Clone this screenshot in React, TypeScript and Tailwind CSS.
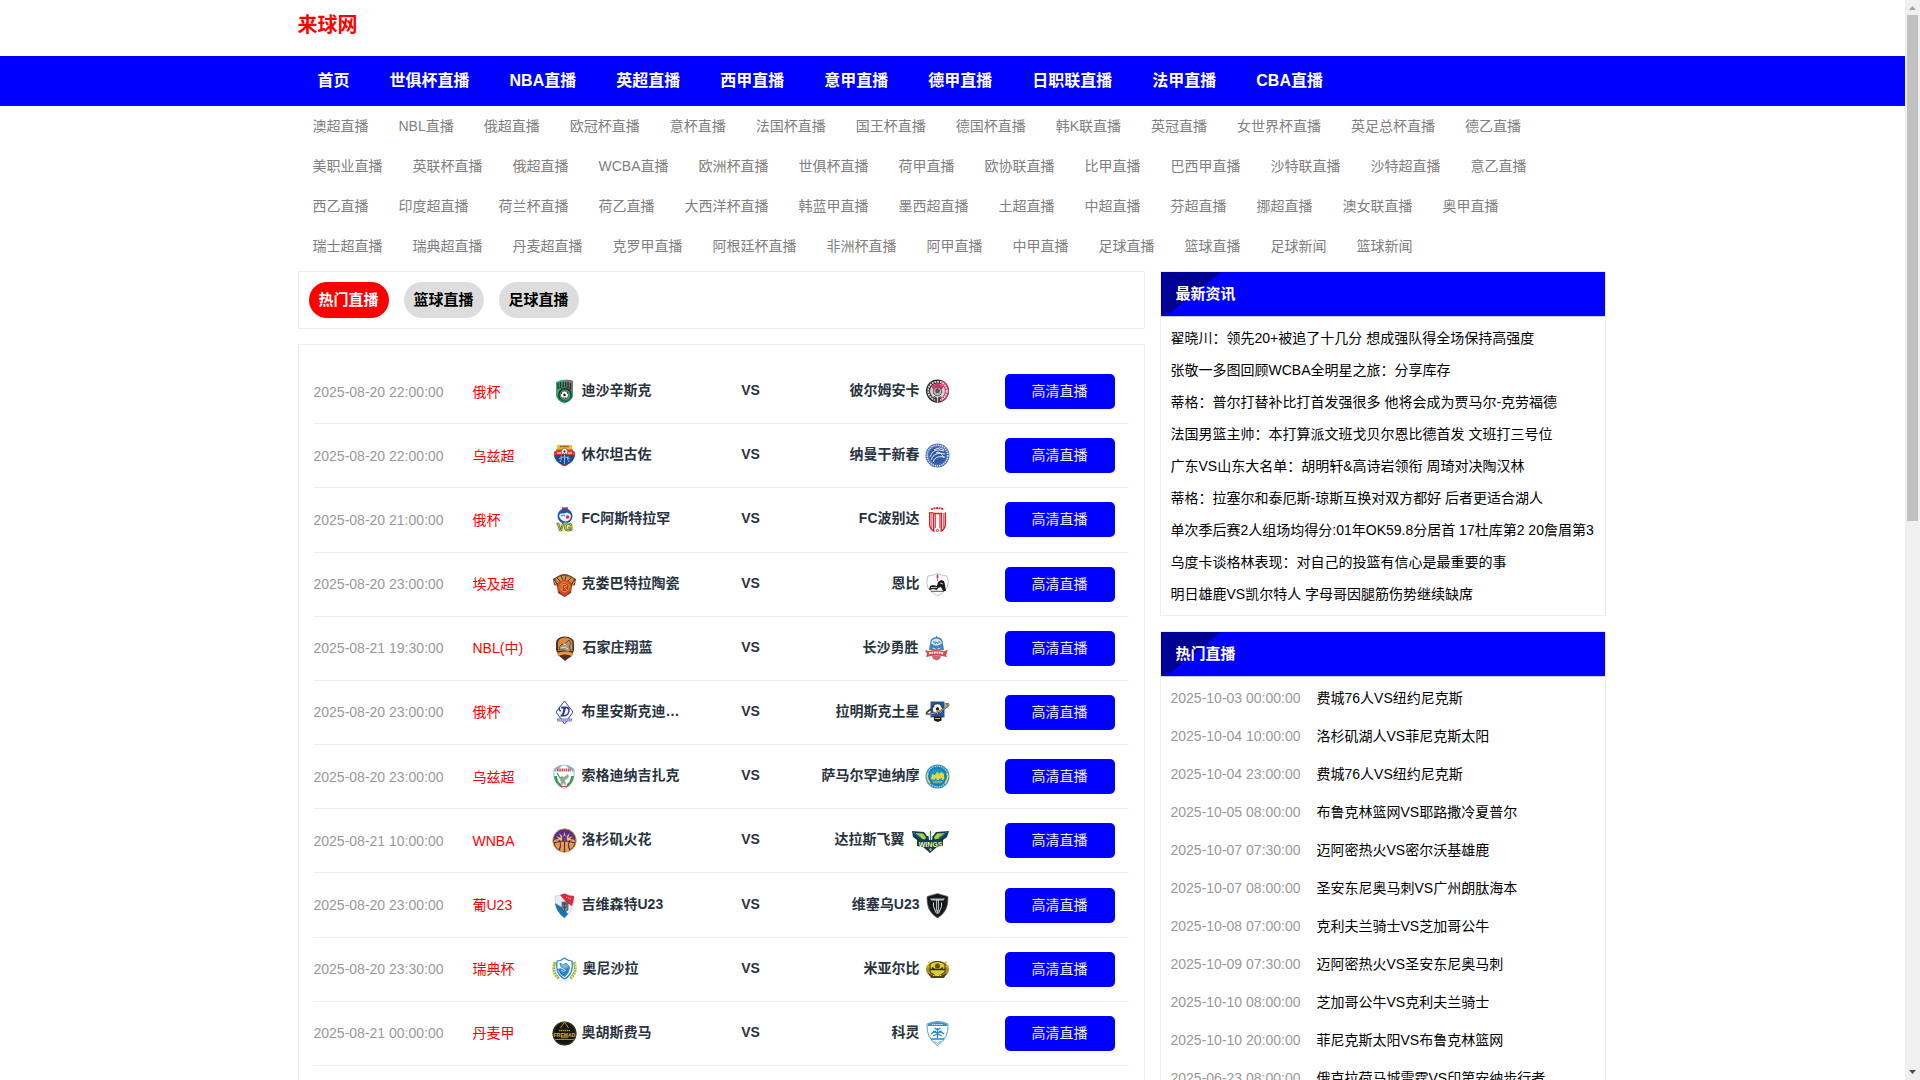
import React from "react";

const mainNav = ["首页", "世俱杯直播", "NBA直播", "英超直播", "西甲直播", "意甲直播", "德甲直播", "日职联直播", "法甲直播", "CBA直播"];

const subNav = [
	"澳超直播", "NBL直播", "俄超直播", "欧冠杯直播", "意杯直播", "法国杯直播", "国王杯直播", "德国杯直播", "韩K联直播", "英冠直播", "女世界杯直播", "英足总杯直播", "德乙直播",
	"美职业直播", "英联杯直播", "俄超直播", "WCBA直播", "欧洲杯直播", "世俱杯直播", "荷甲直播", "欧协联直播", "比甲直播", "巴西甲直播", "沙特联直播", "沙特超直播", "意乙直播",
	"西乙直播", "印度超直播", "荷兰杯直播", "荷乙直播", "大西洋杯直播", "韩蓝甲直播", "墨西超直播", "土超直播", "中超直播", "芬超直播", "挪超直播", "澳女联直播", "奥甲直播",
	"瑞士超直播", "瑞典超直播", "丹麦超直播", "克罗甲直播", "阿根廷杯直播", "非洲杯直播", "阿甲直播", "中甲直播", "足球直播", "篮球直播", "足球新闻", "篮球新闻",
];

const tabs = ["热门直播", "篮球直播", "足球直播"];

const news = [
	"翟晓川：领先20+被追了十几分 想成强队得全场保持高强度",
	"张敬一多图回顾WCBA全明星之旅：分享库存",
	"蒂格：普尔打替补比打首发强很多 他将会成为贾马尔-克劳福德",
	"法国男篮主帅：本打算派文班戈贝尔恩比德首发 文班打三号位",
	"广东VS山东大名单：胡明轩&高诗岩领衔 周琦对决陶汉林",
	"蒂格：拉塞尔和泰厄斯-琼斯互换对双方都好 后者更适合湖人",
	"单次季后赛2人组场均得分:01年OK59.8分居首 17杜库第2 20詹眉第3",
	"乌度卡谈格林表现：对自己的投篮有信心是最重要的事",
	"明日雄鹿VS凯尔特人 字母哥因腿筋伤势继续缺席",
];

const hotMatches = [
	{ time: "2025-10-03 00:00:00", name: "费城76人VS纽约尼克斯" },
	{ time: "2025-10-04 10:00:00", name: "洛杉矶湖人VS菲尼克斯太阳" },
	{ time: "2025-10-04 23:00:00", name: "费城76人VS纽约尼克斯" },
	{ time: "2025-10-05 08:00:00", name: "布鲁克林篮网VS耶路撒冷夏普尔" },
	{ time: "2025-10-07 07:30:00", name: "迈阿密热火VS密尔沃基雄鹿" },
	{ time: "2025-10-07 08:00:00", name: "圣安东尼奥马刺VS广州朗肽海本" },
	{ time: "2025-10-08 07:00:00", name: "克利夫兰骑士VS芝加哥公牛" },
	{ time: "2025-10-09 07:30:00", name: "迈阿密热火VS圣安东尼奥马刺" },
	{ time: "2025-10-10 08:00:00", name: "芝加哥公牛VS克利夫兰骑士" },
	{ time: "2025-10-10 20:00:00", name: "菲尼克斯太阳VS布鲁克林篮网" },
	{ time: "2025-06-23 08:00:00", name: "俄克拉荷马城雷霆VS印第安纳步行者" },
];

const Ball = ({ cx, cy, r }: { cx: number; cy: number; r: number }) => (
	<g transform={`translate(${cx} ${cy}) scale(${r / 4})`}>
		<circle r="4" fill="#fff" stroke="#222" strokeWidth=".6" />
		<path d="M0-1.5l1.4 1-.5 1.7h-1.8l-.5-1.7zM-3.6-1.4l1 .3.2-1.5-.9.2zM3.6-1.4l-1 .3-.2-1.5.9.2zM-2 3.3l.4-1.2 1.4.8-.3.9zM2 3.3l-.4-1.2-1.4.8.3.9z" fill="#222" />
	</g>
);

const crests: Record<string, React.ReactNode> = {
	khimik: (
		<>
			<path d="M4 3Q12-1 21 2V17Q20 22 12.5 24.5Q5 22 4 17z" fill="#3da474" />
			<path d="M12 1Q18 0 21 2V12H14z" fill="#777b79" />
			<path d="M6 4v6M8.500 3v6M11 3v5M13.500 3v5M16 3v6M18.500 4v7" stroke="#26332e" strokeWidth="1.300" />
			<path d="M6 9h13" stroke="#26332e" strokeWidth=".7" />
			<circle cx="13" cy="16" r="6.200" fill="none" stroke="#24332c" strokeWidth="1.500" />
			<Ball cx={12.500} cy={16} r={4} />
			<path d="M7 20Q12.500 25 19 19" fill="none" stroke="#1e7d4e" strokeWidth="1.500" />
		</>
	),
	perm: (
		<>
			<circle cx="12.500" cy="12" r="11.500" fill="#2a2729" />
			<path d="M16 1A11.500 11.500 0 0 1 16 23z" fill="#c93a70" />
			<circle cx="12.500" cy="12" r="9.300" fill="none" stroke="#e9dfe3" strokeWidth="1.800" strokeDasharray="1.800 .9" />
			<circle cx="12.500" cy="12" r="7.500" fill="#d9d3d5" />
			<path d="M6.500 7.500l4-2.500h4l4 2.500-1.500 3-3-1.500h-3l-3 1.500z" fill="#d8346c" />
			<circle cx="12.500" cy="12.500" r="4.300" fill="#b9b2b5" stroke="#444" strokeWidth=".8" />
			<path d="M10 11l2.500-2 2.500 2-1 3h-3z" fill="#5d4f55" />
			<path d="M9 17l3.500 2 3.500-2-2 7h-3z" fill="#453d40" />
			<path d="M12.500 17v7" stroke="#e8e4e5" strokeWidth=".9" />
		</>
	),
	surkhon: (
		<>
			<path d="M2 9Q5 8 5 5h15q0 3 3 4Q24 19 12.500 23Q1 19 2 9z" fill="#164d96" />
			<path d="M2 9Q5 8 5 6h5l2 6H2zM23 9Q20 8 20 6h-5l-2 6h10z" fill="#e3372b" />
			<path d="M5 2h15v4.500H5z" fill="#f2bd16" />
			<path d="M8 3.500h9" stroke="#7b5a10" strokeWidth="1.500" strokeDasharray="1.500 .6" />
			<Ball cx={12.500} cy={8.500} r={3.300} />
			<path d="M5 10h4M16 10h4" stroke="#fff" strokeWidth="1.200" />
			<path d="M12.500 12v9M9 13q1 4-1 6M16 13q-1 4 1 6M7 16q5-4 11 0" fill="none" stroke="#9fc1e6" strokeWidth=".9" />
			<path d="M9 21.500Q12.500 24 16 21.500" stroke="#d33" fill="none" />
		</>
	),
	namangan: (
		<>
			<circle cx="12.500" cy="12.500" r="12" fill="#4d6fb5" />
			<circle cx="12.500" cy="12.500" r="10.300" fill="none" stroke="#dbe5f5" strokeWidth="1.500" strokeDasharray="1.300 .9" />
			<circle cx="12.500" cy="12.500" r="8.500" fill="#315aa8" />
			<path d="M5 14Q8 4 19 8M6 17Q9 8 20 11M8 19Q10 12 20 14M11 10q4-3 8 5M9 7q6-4 10 0" fill="none" stroke="#dfe8f6" strokeWidth="1" />
		</>
	),
	volgar: (
		<>
			<path d="M10 .3h6v2.500h-6z" fill="#dd2531" />
			<circle cx="13" cy="9" r="7.500" fill="#1d56a5" />
			<path d="M7 8.500q1-3 5-2l3-1q4 1 4 4-1 5-6 5-5-1-6-6z" fill="#e8f2fb" />
			<path d="M9 9q2-2 4 0" stroke="#2b76bd" fill="none" />
			<circle cx="15.500" cy="10" r="1.800" fill="#e3303a" />
			<path d="M4 16l4-.5 2 4 2-4 8 .5 1 3-1 5.500H8z" fill="#fff24d" />
			<text x="12.700" y="24.300" textAnchor="middle" fontFamily="Liberation Sans" fontWeight="700" fontSize="11" fill="#fff24d" stroke="#28508f" strokeWidth=".7">VG</text>
		</>
	),
	pobeda: (
		<>
			<path d="M6 2.500Q12.500-.5 19 2.500" fill="none" stroke="#dd1f2b" strokeWidth="1.800" strokeDasharray="2 .6" />
			<path d="M4.700 5.500v12q0 4 4 6.500V6.500h7.600V24q4-2.500 4-6.500v-12" fill="none" stroke="#de202c" strokeWidth="1.500" />
			<path d="M10.500 6.500v14.500M14.700 6.500v14.500M6.800 6v15M18.300 6v15" stroke="#de202c" strokeWidth=".8" />
			<path d="M4 5.700h4.500" stroke="#de202c" />
			<circle cx="12.500" cy="23.500" r="1.100" fill="none" stroke="#de202c" />
		</>
	),
	ceramica: (
		<>
			<path d="M1 7l5-3q6-4 13 0l5 3-1 6-3 1-1 7-6.500 4L6 21 5 14 2 13z" fill="#7e351f" />
			<path d="M3 7q9-7 19 0l-2 4H5z" fill="#c79545" />
			<path d="M5 6l3 3M9 4l2 4M14 4l-1 4M19 6l-3 3" stroke="#5a2b22" />
			<path d="M6 10q6-4 13 0v9l-6.500 5L6 19z" fill="#d3482a" />
			<circle cx="12.500" cy="15" r="4.600" fill="#c23b22" stroke="#e8a13b" strokeWidth=".9" />
			<path d="M10 18v-5l3-1 2 2-3 1 3 3M2 9l3 5M23 9l-3 5" stroke="#efb246" fill="none" strokeWidth=".9" />
		</>
	),
	enppi: (
		<>
			<path d="M3 4Q8 4 12.500 1Q17 4 22 4Q27 17 12.500 24Q-2 17 3 4z" fill="#fff" stroke="#b4b4b4" strokeWidth=".8" />
			<path d="M12.500 2.500v4" stroke="#e0232b" strokeWidth="1.700" />
			<path d="M12.500 7v2" stroke="#444" strokeWidth=".7" />
			<path d="M4 18l1-4 3-1 4 1 1-4 3-2 3 1 1 4 1 6h-3l-2-4-3 1-1 2-4-1-3 1z" fill="#1d1d1d" />
			<path d="M6 15.500h6M15 11l3 1" stroke="#fff" strokeWidth=".7" />
			<path d="M6 19.300h13" stroke="#555" strokeWidth="1" />
		</>
	),
	shijiazhuang: (
		<>
			<path d="M4 7q0-6 8.500-6.500Q22 1 22 7v7l-2 6-7 4.500-6-4.500-3-6z" fill="#423429" />
			<path d="M6 7q0-5 7-5.500 7 .5 7.500 5.500v8H6z" fill="#e2873c" />
			<path d="M7 14q0-4 3-6l2 1 5-5 2 4-2 2 2 5-3 1q-5-3-9-2z" fill="#a8977f" stroke="#4a3b30" strokeWidth=".8" />
			<path d="M9 12l4-1 3 2M11 9l3-1" stroke="#ece2d0" strokeWidth=".9" fill="none" />
			<path d="M5 17q8-3 16 0l-1 3q-7-3-14 0z" fill="#ef9339" />
			<path d="M9 21h8l-4 4z" fill="#6b2319" />
		</>
	),
	changsha: (
		<>
			<path d="M6 8q0-7 6.500-7T19 8l1 6H5z" fill="#3c86bf" />
			<path d="M12.500 0v3" stroke="#3c86bf" />
			<path d="M8 4.500q4-4 9 0l1 3-4 2h-3L7 7.500z" fill="#d5e8f4" />
			<path d="M9 6h2.500M14 6h2.500M11 8l1.500-2 1.500 2" stroke="#2b6da8" fill="none" />
			<path d="M8.500 12l3 1M16.500 12l-3 1" stroke="#cfe4f2" fill="none" />
			<path d="M1 14l4 1q7-2 15 0l4-1-2 5 1 2q-10-3-21 0l1-3z" fill="#d84b46" />
			<path d="M5 17.300q7-1.500 15 0" stroke="#fff" strokeWidth="2" strokeDasharray="1.800 .7" fill="none" />
			<path d="M8 20q4-1 9 0l-1 3-3.500 1.500L9 23z" fill="#c96a72" />
		</>
	),
	dynamo: (
		<>
			<path d="M12.500 1l8.500 11-8.500 12L4 12z" fill="#fff" stroke="#3a3f98" strokeWidth="1" />
			<path d="M9.500 6.500h4q5 0 4 5-1 5-6 5H8l1-2h1l1.500-6H9zM14 8l-2 7q3 0 4-3t-2-4z" fill="#3036a0" fillRule="evenodd" />
			<path d="M7.500 8q-1 3 1.500 3" stroke="#3036a0" fill="none" strokeWidth="1.300" />
			<path d="M4.500 18.500h16l-1 3h-14z" fill="#7679bd" />
			<path d="M6 20h13" stroke="#e9eaf8" strokeDasharray="1.500 .5" />
		</>
	),
	saturn: (
		<>
			<path d="M5.500 1.500h14v16H5.500z" fill="#2254a3" />
			<path d="M9 16.500h7.500v4l-3.700 1.500L9 20.500z" fill="#16181c" />
			<path d="M10 18.500h5" stroke="#e0b433" strokeWidth="1" />
			<Ball cx={12.500} cy={9} r={5.200} />
			<path d="M19 5q5-2 4.500 0-2 3-10.500 7-9 3-11.500 2-.5-2 5-5" fill="none" stroke="#3b3830" strokeWidth="1.800" />
			<path d="M19 5q5-2 4.500 0-2 3-10.500 7-9 3-11.500 2" fill="none" stroke="#e5d8ab" strokeWidth=".8" />
		</>
	),
	sogdiana: (
		<>
			<path d="M2 5q5-4 10-4 5 0 10 4 2 15-10 19.500Q0 20 2 5z" fill="#fff" stroke="#92a6a1" strokeWidth=".7" />
			<path d="M2 7Q2 3 10 1l-2 3q-4 1-4 4zM22 7Q22 3 14 1l2 3q4 1 4 4z" fill="#74b4da" />
			<path d="M5 6h14" stroke="#cf5358" strokeWidth="3" strokeDasharray="1.600 .6" />
			<path d="M2 12q1 8 8 12l-1-4q-4-3-4-8zM22 12q-1 8-8 12l1-4q4-3 4-8z" fill="#399d55" />
			<path d="M8 15l2-3 2 1 4-3 1 3-4 3 1 6-3-3-1 4-1-4z" fill="#93a79c" />
			<path d="M5 9l3 5 2-1" stroke="#41a45c" fill="none" strokeWidth="1.300" />
			<path d="M9 22.500h6" stroke="#d3545a" />
		</>
	),
	samarkand: (
		<>
			<circle cx="12.500" cy="12.500" r="12" fill="#2689bd" />
			<circle cx="12.500" cy="12.500" r="10.500" fill="none" stroke="#a7d9e8" strokeWidth="1.300" strokeDasharray="1.300 1" />
			<path d="M3 9q-2 5 2 10M22 9q2 5-2 10" fill="none" stroke="#e2dc3e" strokeWidth="1.500" />
			<circle cx="12.500" cy="12.500" r="8.300" fill="#0f9cc9" stroke="#1c6d9a" strokeWidth=".7" />
			<path d="M6 15l1-5 3 1 2-3 2 1-1 2 3-3 3 2v5l-1 1h-1v-2l-3 1v1h-2l-1-2-2 2z" fill="#e7d638" />
			<path d="M8 18h9" stroke="#d7c93a" />
		</>
	),
	sparks: (
		<>
			<circle cx="12.500" cy="12.500" r="11.700" fill="#5b2d85" stroke="#dd9b38" strokeWidth="1" />
			<path d="M2 12q10-4 21 0-1 9-8 11.500h-5Q3 21 2 12z" fill="#e6a23c" />
			<path d="M12.500 11v13M2 15q10-4 21 0M7 12q3 5 0 10M18 12q-3 5 0 10" stroke="#4f286f" fill="none" strokeWidth="1.200" />
			<path d="M12.500 4l1.500 5 4-4-2 5 5-2-4 4h-9l-4-4 5 2-2-5 4 4z" fill="#e9c47c" />
			<path d="M10 9q2.500-3 5 0v4h-5z" fill="#6c3b8c" />
		</>
	),
	wings: (
		<>
			<path d="M2 3l12 1 3 4h6l3-4 13-1-2 6-4 3v6l-6 1-7 6-7-6-6-1v-6l-4-3z" fill="#123c55" />
			<path d="M5 5l8 .5 3 4-1 2q-5-1-6-3zM35 5l-8 .5-3 4 1 2q5-1 7-3z" fill="#b8ce3d" />
			<path d="M3 4l8 6M37 4l-8 6" stroke="#14788b" strokeWidth="1.500" />
			<path d="M18 4h5l-1 8h-3z" fill="#e8f0ce" />
			<path d="M20.500 3v9" stroke="#257892" strokeWidth="1" />
			<text x="20.500" y="18.500" textAnchor="middle" fontFamily="Liberation Sans" fontWeight="700" fontSize="7" fill="#f1f4a8">WINGS</text>
			<circle cx="20.500" cy="21.500" r="1.200" fill="#c6d545" />
		</>
	),
	gilvicente: (
		<>
			<path d="M3 3q5 0 9.500-2.500Q17 3 22 3q1 14-9.500 22Q2 17 3 3z" fill="#e9edf3" stroke="#b9c1cf" strokeWidth=".5" />
			<path d="M8 2l4.500-1.500Q17 3 22 3q0 5-2 10l-5-3z" fill="#e52535" />
			<path d="M3 10l8 5 5 6-3.500 4Q4 19 3 10z" fill="#1674b5" />
			<path d="M10 9h6v8l-3 2-3-2z" fill="#7c8794" stroke="#3e4f64" strokeWidth=".7" />
			<path d="M10 11h6M11 14h4M12.500 9v9" stroke="#26384e" strokeWidth=".8" />
			<path d="M14 4l5 2" stroke="#fff" strokeWidth="1" strokeDasharray="1 1" />
		</>
	),
	vizela: (
		<>
			<path d="M2 3.500L12.500.5 23 3.500q1 15-10.500 21.500Q1 18.500 2 3.500z" fill="#17181b" stroke="#777" strokeWidth=".7" />
			<path d="M5 5.500h15l-1.500 2H14v9l-1.500 5-1.500-5v-9H6.500z" fill="#b9babd" />
			<path d="M8.500 9.500v4l3 7M16.500 9.500v4l-3 7" stroke="#ececec" strokeWidth=".9" fill="none" />
			<path d="M12.500 8v9" stroke="#222" strokeWidth=".9" />
		</>
	),
	onsala: (
		<>
			<path d="M3 5q-4 10 4 17M22 5q4 10-4 17" fill="none" stroke="#b6bf3d" strokeWidth="3" strokeDasharray="2 .7" />
			<path d="M3 7q-2 9 5 14M22 7q2 9-5 14" fill="none" stroke="#3f9c83" strokeWidth="1" strokeDasharray="1 1" />
			<path d="M5 4q4 0 7.500-3Q16 4 20 4q2 13-7.500 18Q3 17 5 4z" fill="#fff" stroke="#2d86c4" strokeWidth="1.200" />
			<path d="M6 12q3-2 6 1l6-4q0 7-5.500 11Q7 17 6 12z" fill="#2b83c8" />
			<path d="M8 6l3 2 3-2 3 3-4 3-4-2z" fill="#7bb9e3" stroke="#2d7fbd" strokeWidth=".8" />
			<path d="M9 13q3 3 5 0M8 23h9" stroke="#c7e2f4" fill="none" />
		</>
	),
	mjallby: (
		<>
			<ellipse cx="12.500" cy="12.500" rx="11.500" ry="8.500" fill="#a78f25" />
			<path d="M3 5l5 2M22 5l-5 2M1 9l5 1M24 9l-5 1" stroke="#d6c133" strokeWidth="1.500" />
			<path d="M5 7q7-5 15 0v8l-7.500 5L5 15z" fill="#e5cc23" stroke="#3b351d" strokeWidth="1" />
			<circle cx="12.500" cy="9" r="2.500" fill="#5a501b" />
			<path d="M5 12.500h15M7 10.500l3 2M18 10.500l-3 2" stroke="#2f2b18" strokeWidth="1.500" />
			<path d="M3 16q9 6 19 0l-3 5H6z" fill="#4b431d" />
			<path d="M8 18.500h9" stroke="#e8dc75" strokeDasharray="1.500 .7" />
		</>
	),
	fremad: (
		<>
			<circle cx="12.500" cy="12.500" r="12" fill="#17140c" />
			<circle cx="12.500" cy="12.500" r="11.300" fill="none" stroke="#57460f" strokeWidth=".7" />
			<path d="M8.500 7l4-6 4 6" fill="none" stroke="#c7a42b" strokeWidth=".9" />
			<path d="M7 9.500h11" stroke="#b2922a" strokeWidth="1.700" strokeDasharray="1.500 .5" />
			<text x="12.500" y="15.500" textAnchor="middle" fontFamily="Liberation Sans" fontWeight="700" fontSize="5" fill="#dfb92f">FREMAD</text>
			<path d="M3 18.500h19M9 16.700h7" stroke="#c7a42b" strokeWidth=".8" />
		</>
	),
	kolding: (
		<>
			<path d="M2 3q5-2.500 10.500-2.500T23 3q1 14-10.500 21.500Q1 17 2 3z" fill="#fff" stroke="#4d9dcd" strokeWidth="1" />
			<path d="M3 3q10-4 19 0v2H3z" fill="#3d91c5" />
			<path d="M7 3.500h11" stroke="#d8ebf5" strokeWidth="1" strokeDasharray="1.200 .6" />
			<path d="M12.500 7v10M12.500 9l-3-2M12.500 9l3-2M6 13q3-3 6.500-1Q16 10 19 13M8 15l4-2M17 15l-4-2M6 18h13" stroke="#2e86bd" strokeWidth="1.300" fill="none" />
			<path d="M8 10.500h3M14 10.500h3" stroke="#2e86bd" strokeWidth="1.500" />
			<path d="M9 20l3.500 2.500L16 20" stroke="#72b4da" fill="none" />
		</>
	),
};

const Crest = ({ name }: { name: string }) => {
	if (name === "wings") {
		return (
			<svg viewBox="0 0 40 25" className="h-[25px] w-10 shrink-0" aria-hidden="true">
				{crests[name]}
			</svg>
		);
	}
	// a few badges are slightly wider than they are tall
	const loose = ["shijiazhuang", "changsha", "onsala"].includes(name);
	return (
		<svg
			viewBox={loose ? "0 0 26 25" : "0 0 25 25"}
			className={loose ? "h-[25px] w-[26px] shrink-0" : "size-[25px] shrink-0"}
			aria-hidden="true"
		>
			{crests[name]}
		</svg>
	);
};

const matches = [
	{ time: "2025-08-20 22:00:00", league: "俄杯", home: "迪沙辛斯克", homeLogo: "khimik", away: "彼尔姆安卡", awayLogo: "perm" },
	{ time: "2025-08-20 22:00:00", league: "乌兹超", home: "休尔坦古佐", homeLogo: "surkhon", away: "纳曼干新春", awayLogo: "namangan" },
	{ time: "2025-08-20 21:00:00", league: "俄杯", home: "FC阿斯特拉罕", homeLogo: "volgar", away: "FC波别达", awayLogo: "pobeda" },
	{ time: "2025-08-20 23:00:00", league: "埃及超", home: "克娄巴特拉陶瓷", homeLogo: "ceramica", away: "恩比", awayLogo: "enppi" },
	{ time: "2025-08-21 19:30:00", league: "NBL(中)", home: "石家庄翔蓝", homeLogo: "shijiazhuang", away: "长沙勇胜", awayLogo: "changsha" },
	{ time: "2025-08-20 23:00:00", league: "俄杯", home: "布里安斯克迪…", homeLogo: "dynamo", away: "拉明斯克土星", awayLogo: "saturn" },
	{ time: "2025-08-20 23:00:00", league: "乌兹超", home: "索格迪纳吉扎克", homeLogo: "sogdiana", away: "萨马尔罕迪纳摩", awayLogo: "samarkand" },
	{ time: "2025-08-21 10:00:00", league: "WNBA", home: "洛杉矶火花", homeLogo: "sparks", away: "达拉斯飞翼", awayLogo: "wings" },
	{ time: "2025-08-20 23:00:00", league: "葡U23", home: "吉维森特U23", homeLogo: "gilvicente", away: "维塞乌U23", awayLogo: "vizela" },
	{ time: "2025-08-20 23:30:00", league: "瑞典杯", home: "奥尼沙拉", homeLogo: "onsala", away: "米亚尔比", awayLogo: "mjallby" },
	{ time: "2025-08-21 00:00:00", league: "丹麦甲", home: "奥胡斯费马", homeLogo: "fremad", away: "科灵", awayLogo: "kolding" },
];

const Header = () => (
	<header>
		<div className="mx-auto h-14 max-w-[1310px]">
			<h1 className="text-xl leading-[50px] font-bold text-[#ff0000]">
				<a href="#">来球网</a>
			</h1>
		</div>
		<nav className="bg-[#0000ff]">
			<div className="mx-auto flex max-w-[1310px]">
				{mainNav.map((item) => (
					<a key={item} href="#" className="px-5 text-base leading-[50px] font-bold text-white">
						{item}
					</a>
				))}
			</div>
		</nav>
		<nav className="mx-auto flex max-w-[1310px] flex-wrap">
			{subNav.map((item, i) => (
				<a key={i} href="#" className="px-[15px] text-sm leading-10 text-[#808080]">
					{item}
				</a>
			))}
		</nav>
	</header>
);

const MatchRow = ({ match }: { match: (typeof matches)[number] }) => (
	<li className="flex items-center border-b border-[#eeeeee]">
		<time className="w-[159px] text-[#999999]">{match.time}</time>
		<span className="w-[79px] text-[#ff0000]">{match.league}</span>
		<div className="grid flex-1 grid-cols-[1fr_auto_1fr] items-center font-bold text-[#28333e]">
			<div className="flex items-center gap-[5px]">
				<Crest name={match.homeLogo} />
				<span className="pb-[3px]">{match.home}</span>
			</div>
			<span className="pb-[3px]">VS</span>
			<div className="flex items-center justify-end gap-[5px]">
				<span className="pb-[3px]">{match.away}</span>
				<Crest name={match.awayLogo} />
			</div>
		</div>
		<a href="#" className="mr-[14px] ml-[55px] w-[110px] rounded-[5px] bg-[#0000ff] text-center leading-[35px] text-[#eeeeee]">
			高清直播
		</a>
	</li>
);

const Panel = ({ title, children }: { title: string; children: React.ReactNode }) => (
	<section className="border border-[#eeeeee]">
		<div className="relative border-b border-[#cccccc] bg-[#0000ff] px-[15px]">
			<svg viewBox="0 0 60 44" className="absolute top-0 left-0 h-11 w-[60px]" aria-hidden="true">
				<path d="M0 0H60L13 38Q11 40 8 41L0 43z" fill="#000094" />
			</svg>
			<h2 className="relative text-[15px] leading-[44px] font-bold text-white">{title}</h2>
		</div>
		{children}
	</section>
);

const Scrollbar = () => (
	<div className="flex w-[15px] shrink-0 flex-col items-center justify-between bg-[#f0f0f0]" aria-hidden="true">
		<div className="flex w-full flex-col items-center">
			<svg viewBox="0 0 15 15" className="size-[15px]">
				<path d="M4 10h7L7.500 6z" fill="#a3a3a3" />
			</svg>
			<div className="h-[506px] w-[11px] bg-[#c1c1c1]" />
		</div>
		<svg viewBox="0 0 15 15" className="size-[15px]">
			<path d="M4 5h7L7.500 9z" fill="#505050" />
		</svg>
	</div>
);

export default function App() {
	const [active, setActive] = React.useState(0);

	return (
		<div className="flex h-screen overflow-hidden bg-white font-['Liberation_Sans','Noto_Sans_CJK_SC',sans-serif] text-sm">
			<div className="min-w-0 flex-1 overflow-hidden">
				<Header />
				<main className="mx-auto mt-[5px] grid max-w-[1310px] grid-cols-[minmax(0,1fr)_446px] gap-[15px] pr-0.5">
					<div className="flex flex-col gap-[15px]">
						<div className="flex gap-[15px] border border-[#eeeeee] p-[10px]">
							{tabs.map((tab, i) => (
								<button
									key={tab}
									type="button"
									onClick={() => setActive(i)}
									className={
										"rounded-full px-[10px] text-[15px] leading-9 font-bold " +
										(active === i ? "bg-[#ff0000] text-white" : "bg-[#dddddd] text-black")
									}
								>
									{tab}
								</button>
							))}
						</div>
						<div className="flex-1 border border-[#eeeeee] p-[15px]">
							<ul className="grid min-h-[706px] auto-rows-fr">
								{matches.map((match, i) => (
									<MatchRow key={i} match={match} />
								))}
							</ul>
						</div>
					</div>
					<aside className="flex flex-col gap-[15px]">
						<Panel title="最新资讯">
							<ul className="px-[10px] py-[5px]">
								{news.map((item) => (
									<li key={item} className="truncate leading-8 text-black">
										<a href="#">{item}</a>
									</li>
								))}
							</ul>
						</Panel>
						<Panel title="热门直播">
							<ul className="flex flex-col gap-[6px] px-[10px] py-[5px]">
								{hotMatches.map((item) => (
									<li key={item.time} className="flex gap-4 leading-8">
										<time className="text-[#999999]">{item.time}</time>
										<a href="#" className="text-black">{item.name}</a>
									</li>
								))}
							</ul>
						</Panel>
					</aside>
				</main>
			</div>
			<Scrollbar />
		</div>
	);
}
